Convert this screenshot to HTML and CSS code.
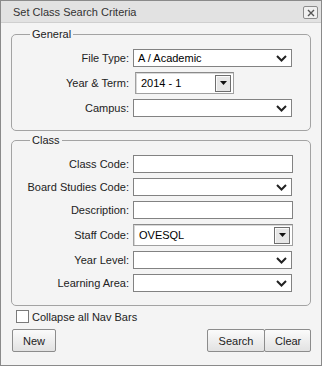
FILE: index.html
```html
<!DOCTYPE html>
<html lang="en">
<head>
<meta charset="UTF-8" />
<meta name="viewport" content="width=device-width, initial-scale=1.0" />
<title>Set Class Search Criteria</title>
<link rel="stylesheet" href="styles.css">
</head>
<body>

<!-- Search criteria dialog -->
<div class="dialog">
  <div class="titlebar">
    <span class="title">Set Class Search Criteria</span>
    <button class="close-btn" type="button" title="Close">
      <svg width="8" height="8" viewBox="0 0 8 8"><path d="M1 1L7 7M7 1L1 7" stroke="#555" stroke-width="1.4"/></svg>
    </button>
  </div>

  <div class="dialog-body">

    <fieldset class="group">
      <legend>General</legend>
      <div class="form-grid">
        <label>File Type:</label>
        <div class="select"><span>A / Academic</span><svg class="chev" width="11" height="7" viewBox="0 0 11 7"><path d="M1 1L5.5 5.5L10 1" fill="none" stroke="#222" stroke-width="2"/></svg></div>

        <label>Year &amp; Term:</label>
        <div class="combo combo-short"><span>2014 - 1</span><span class="drop"><svg width="7" height="4" viewBox="0 0 7 4"><path d="M0 0H7L3.5 4Z" fill="#111"/></svg></span></div>

        <label>Campus:</label>
        <div class="select"><span></span><svg class="chev" width="11" height="7" viewBox="0 0 11 7"><path d="M1 1L5.5 5.5L10 1" fill="none" stroke="#222" stroke-width="2"/></svg></div>
      </div>
    </fieldset>

    <fieldset class="group">
      <legend>Class</legend>
      <div class="form-grid">
        <label>Class Code:</label>
        <input class="text" type="text">

        <label>Board Studies Code:</label>
        <div class="select"><span></span><svg class="chev" width="11" height="7" viewBox="0 0 11 7"><path d="M1 1L5.5 5.5L10 1" fill="none" stroke="#222" stroke-width="2"/></svg></div>

        <label>Description:</label>
        <input class="text" type="text">

        <label>Staff Code:</label>
        <div class="combo"><span>OVESQL</span><span class="drop"><svg width="7" height="4" viewBox="0 0 7 4"><path d="M0 0H7L3.5 4Z" fill="#111"/></svg></span></div>

        <label>Year Level:</label>
        <div class="select"><span></span><svg class="chev" width="11" height="7" viewBox="0 0 11 7"><path d="M1 1L5.5 5.5L10 1" fill="none" stroke="#222" stroke-width="2"/></svg></div>

        <label>Learning Area:</label>
        <div class="select"><span></span><svg class="chev" width="11" height="7" viewBox="0 0 11 7"><path d="M1 1L5.5 5.5L10 1" fill="none" stroke="#222" stroke-width="2"/></svg></div>
      </div>
    </fieldset>

    <label class="check"><span class="box"></span>Collapse all Nav Bars</label>

    <div class="actions">
      <button class="btn btn-new" type="button">New</button>
      <div class="btn-group">
        <button class="btn btn-search" type="button">Search</button>
        <button class="btn btn-clear" type="button">Clear</button>
      </div>
    </div>

  </div>
</div>

</body>
</html>
```

FILE: styles.css
```css
body {
  margin: 0;
  padding: 0;
  font-family: "Liberation Sans", Arial, sans-serif;
  font-size: 11px;
  color: #000;
  background: #fff;
}
/* Dialog frame */
.dialog {
  width: 322px;
  height: 366px;
  box-sizing: border-box;
  border: 1px solid #8a8a8a;
  background: #f4f4f4;
}
.titlebar {
  height: 21px;
  background: #e2e2e2;
  border-bottom: 1px solid #cfcfcf;
  display: flex;
  align-items: center;
  justify-content: space-between;
  padding: 0 3px 0 12px;
}
.title {
  color: #333;
  font-size: 11px;
}
.close-btn {
  width: 15px;
  height: 13px;
  padding: 0;
  margin-top: 2px;
  border: 1px solid #8c8c8c;
  border-radius: 2px;
  background: #f0f0f0;
  display: flex;
  align-items: center;
  justify-content: center;
}
.dialog-body {
  padding: 5px 10px 0 10px;
}
/* Groups */
.group {
  margin: 0 0 3px 0;
  padding: 8px 0 13px 0;
  border: 1px solid #a3a3a3;
  border-radius: 5px;
  background: #f4f4f4;
}
.group legend {
  margin-left: 18px;
  padding: 0 2px;
  line-height: 13px;
  color: #222;
}
.form-grid {
  display: grid;
  grid-template-columns: 117px 160px;
  column-gap: 4px;
  row-gap: 5px;
  align-items: center;
}
.form-grid label {
  text-align: right;
  color: #222;
}
/* Controls */
.select, .text {
  box-sizing: border-box;
  height: 18px;
  width: 159px;
  border: 1px solid #828282;
  background: #fff;
}
.select {
  display: flex;
  align-items: center;
  justify-content: space-between;
  padding: 0 4px 0 4px;
}
.text {
  width: 160px;
  margin: 0;
  padding: 0 4px;
  font: inherit;
}
.combo {
  box-sizing: border-box;
  height: 22px;
  width: 160px;
  border: 1px solid #a0a0a0;
  border-top-color: #8a8a8a;
  box-shadow: inset 1px 1px 0 #d8d8d8;
  background: #fff;
  display: flex;
  align-items: center;
  justify-content: space-between;
  padding: 0 2px 0 5px;
}
.combo-short {
  width: 99px;
  margin-left: 2px;
}
.drop {
  box-sizing: border-box;
  width: 16px;
  height: 17px;
  border: 1px solid #6e6e6e;
  background: #e6e6e6;
  box-shadow: inset 1px 1px 0 #fafafa;
  display: flex;
  align-items: center;
  justify-content: center;
}
/* Checkbox row */
.check {
  display: flex;
  align-items: center;
  gap: 3px;
  margin: 4px 0 0 5px;
  color: #222;
}
.check .box {
  width: 11px;
  height: 11px;
  border: 1px solid #7a7a7a;
  background: #fff;
}
/* Buttons */
.actions {
  display: flex;
  justify-content: space-between;
  margin-top: 6px;
}
.btn-group {
  display: flex;
}
.btn {
  height: 23px;
  padding: 0 10px;
  font: inherit;
  color: #222;
  border: 1px solid #8c8c8c;
  border-radius: 2px;
  background: linear-gradient(#fbfbfb, #e2e2e2);
}
.btn-new {
  width: 44px;
  margin-left: 1px;
}
.btn-search {
  width: 58px;
}
.btn-clear {
  width: 47px;
  margin-left: -1px;
}
```
